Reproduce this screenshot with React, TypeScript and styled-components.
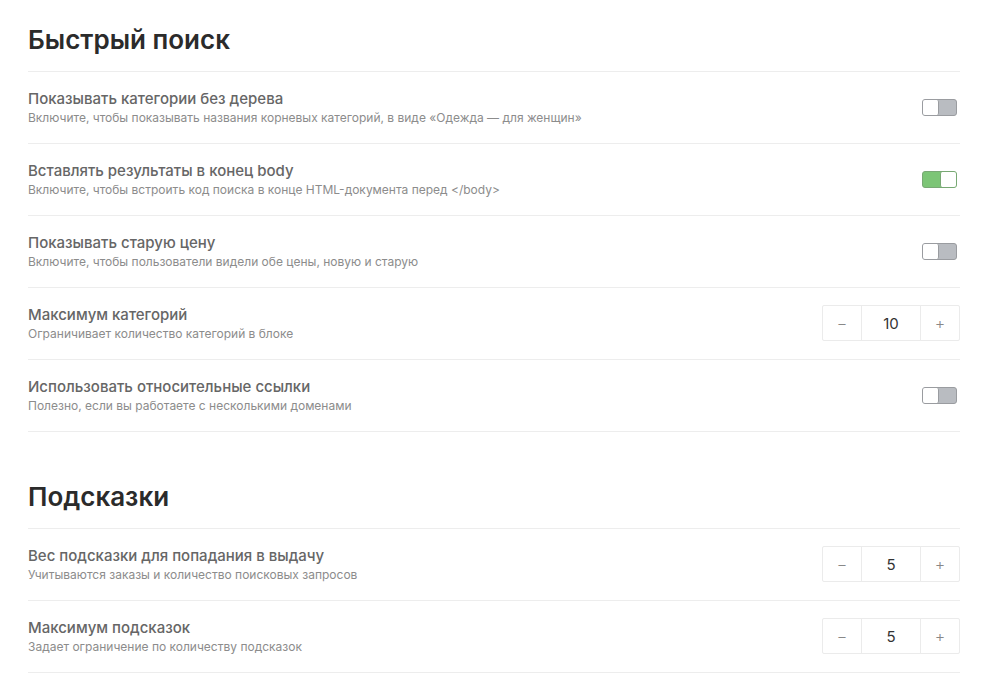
import React from "react";
import styled, { createGlobalStyle } from "styled-components";

const Global = createGlobalStyle`
  html, body { margin: 0; padding: 0; background: #fff; }
  body { font-family: Inter, "Noto Sans", sans-serif; -webkit-font-smoothing: antialiased; }
`;

const Page = styled.div`
  padding: 0 32px 0 28px;
  width: 932px;
`;

const Section = styled.section`
  & + & { margin-top: 25px; }
`;

const Heading = styled.h2`
  margin: 0;
  padding: 24px 0 15px;
  font-size: 26px;
  line-height: 32px;
  font-weight: 600;
  color: #2b2b2b;
  border-bottom: 1px solid #ededed;
`;

const Row = styled.div`
  height: 71px;
  display: flex;
  align-items: center;
  justify-content: space-between;
  border-bottom: 1px solid #ededed;
`;

const Texts = styled.div`
  display: flex;
  flex-direction: column;
  gap: 3px;
`;

const Title = styled.div`
  font-size: 15px;
  line-height: 18px;
  font-weight: 500;
  color: #666;
`;

const Desc = styled.div`
  font-size: 12px;
  line-height: 14px;
  color: #8c8c8c;
`;

const Toggle = styled.div<{ $on?: boolean }>`
  width: 35px;
  height: 17px;
  box-sizing: border-box;
  margin-right: 3px;
  border-radius: 3px;
  border: 1.5px solid ${(p) => (p.$on ? "#78a874" : "#9a9ca0")};
  background: ${(p) => (p.$on ? "#7cc576" : "#b9bcc1")};
  display: flex;
  justify-content: ${(p) => (p.$on ? "flex-end" : "flex-start")};
  &::after {
    content: "";
    width: 16px;
    height: 100%;
    background: #fff;
    border-radius: 2px;
    box-sizing: border-box;
    ${(p) => (p.$on ? "border-left: 1.5px solid #78a874;" : "border-right: 1.5px solid #9a9ca0;")}
  }
`;

const Stepper = styled.div`
  display: flex;
  height: 36px;
  margin-bottom: 1px;
`;

const StepBtn = styled.button`
  width: 40px;
  height: 36px;
  box-sizing: border-box;
  border: 1px solid #ebebeb;
  background: #fff;
  color: #888;
  font-family: Inter, sans-serif;
  font-size: 16px;
  font-weight: 300;
  padding: 0;
  display: flex;
  align-items: center;
  justify-content: center;
  &:first-child { border-radius: 2px 0 0 2px; }
  &:last-child { border-radius: 0 2px 2px 0; margin-left: -1px; }
`;

const StepValue = styled.div`
  width: 60px;
  height: 36px;
  box-sizing: border-box;
  border: 1px solid #ebebeb;
  margin-left: -1px;
  display: flex;
  align-items: center;
  justify-content: center;
  font-size: 15px;
  color: #333;
`;

type Item = {
  title: string;
  desc: string;
  kind: "toggle" | "stepper";
  on?: boolean;
  value?: number;
};

const sections: { heading: string; items: Item[] }[] = [
  {
    heading: "Быстрый поиск",
    items: [
      {
        title: "Показывать категории без дерева",
        desc: "Включите, чтобы показывать названия корневых категорий, в виде «Одежда — для женщин»",
        kind: "toggle",
      },
      {
        title: "Вставлять результаты в конец body",
        desc: "Включите, чтобы встроить код поиска в конце HTML-документа перед </body>",
        kind: "toggle",
        on: true,
      },
      {
        title: "Показывать старую цену",
        desc: "Включите, чтобы пользователи видели обе цены, новую и старую",
        kind: "toggle",
      },
      {
        title: "Максимум категорий",
        desc: "Ограничивает количество категорий в блоке",
        kind: "stepper",
        value: 10,
      },
      {
        title: "Использовать относительные ссылки",
        desc: "Полезно, если вы работаете с несколькими доменами",
        kind: "toggle",
      },
    ],
  },
  {
    heading: "Подсказки",
    items: [
      {
        title: "Вес подсказки для попадания в выдачу",
        desc: "Учитываются заказы и количество поисковых запросов",
        kind: "stepper",
        value: 5,
      },
      {
        title: "Максимум подсказок",
        desc: "Задает ограничение по количеству подсказок",
        kind: "stepper",
        value: 5,
      },
    ],
  },
];

export default function App() {
  return (
    <Page>
      <Global />
      {sections.map((s) => (
        <Section key={s.heading}>
          <Heading>{s.heading}</Heading>
          {s.items.map((it) => (
            <Row key={it.title}>
              <Texts>
                <Title>{it.title}</Title>
                <Desc>{it.desc}</Desc>
              </Texts>
              {it.kind === "toggle" ? (
                <Toggle $on={it.on} />
              ) : (
                <Stepper>
                  <StepBtn>−</StepBtn>
                  <StepValue>{it.value}</StepValue>
                  <StepBtn>+</StepBtn>
                </Stepper>
              )}
            </Row>
          ))}
        </Section>
      ))}
    </Page>
  );
}
